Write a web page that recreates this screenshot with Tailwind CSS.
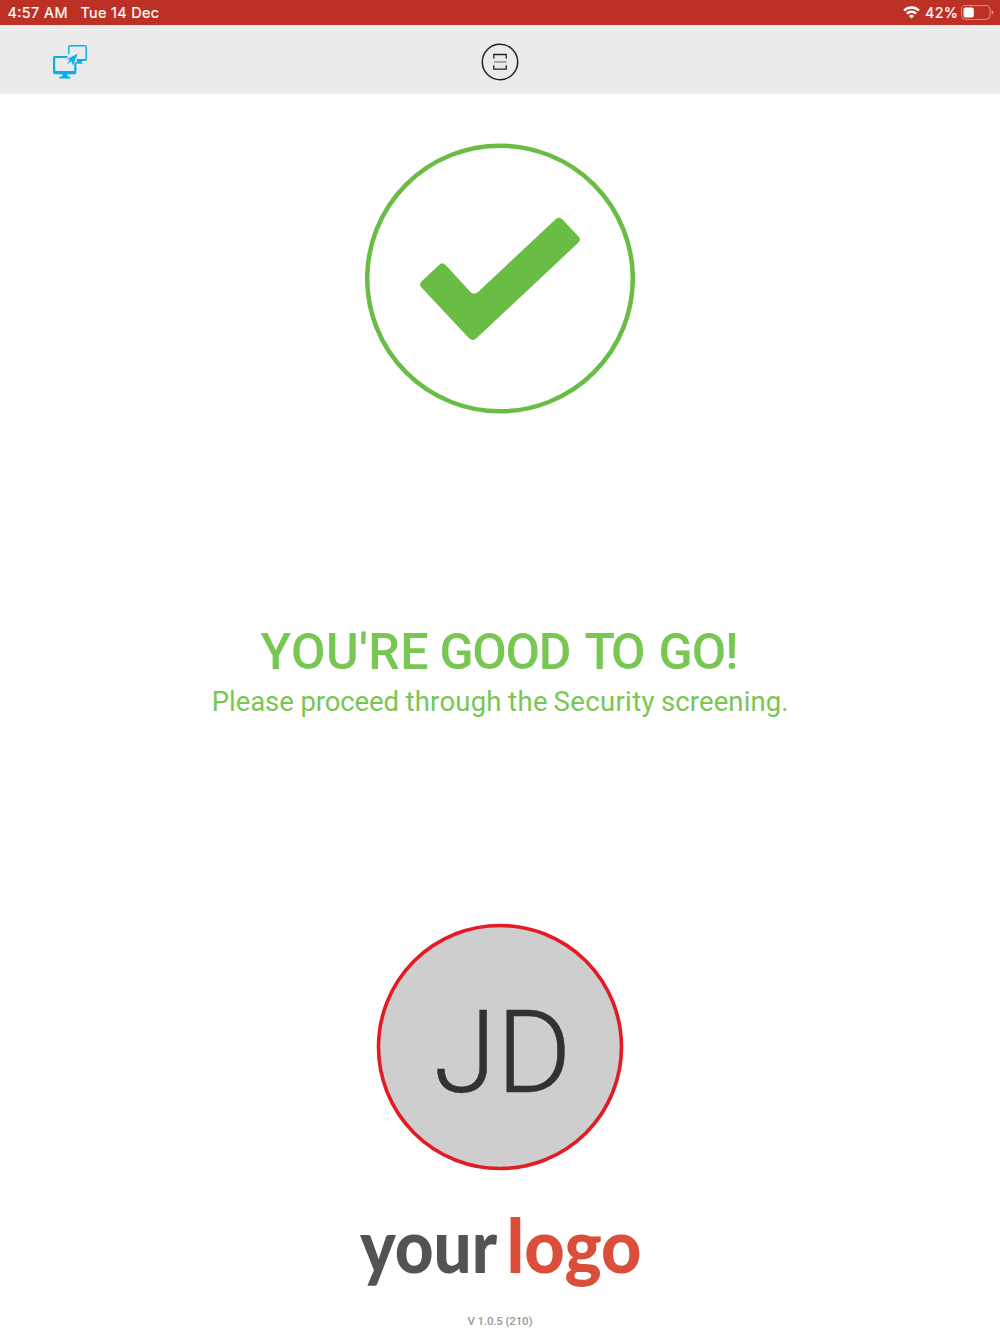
<!DOCTYPE html>
<html lang="en">
<head>
<meta charset="utf-8">
<title>Check-in</title>
<script src="https://cdn.jsdelivr.net/npm/@tailwindcss/browser@4"></script>
</head>
<body class="flex h-[1334px] w-[1000px] flex-col overflow-hidden bg-white font-['Roboto',sans-serif]">
  <div class="flex h-[25px] shrink-0 items-center justify-between bg-[#bd3026] pl-2 pr-[6px] font-['Inter',sans-serif] text-[14.5px] font-normal text-white">
    <svg class="h-[25px] w-[160px]" viewBox="0 0 160 25" fill="#fff" stroke="#fff" stroke-width=".2">
      <text x="-.5" y="17.700" textLength="60">4:57 AM</text>
      <text x="72.500" y="17.700" textLength="78.500">Tue 14 Dec</text>
    </svg>
    <svg class="h-[25px] w-[94px]" viewBox="900 0 94 25" fill="#fff">
      <g fill="none" stroke="#fff" stroke-width="2.3">
        <path d="M904 10.6a10.6 10.6 0 0 1 15 0"/>
        <path d="M906.9 13.6a6.6 6.6 0 0 1 9.2 0"/>
      </g>
      <path d="M908.9 15.9a3.8 3.8 0 0 1 5.2 0l-2.6 2.6z"/>
      <text x="925" y="17.700" textLength="33" stroke="#fff" stroke-width=".2">42%</text>
      <rect x="961.5" y="5.6" width="28.5" height="13.8" rx="4" fill="none" stroke="#fff" stroke-opacity=".45"/>
      <rect x="963.5" y="7.6" width="10.3" height="9.8" rx="2"/>
      <path d="M991.6 10.2q1.8.6 1.8 2.3t-1.8 2.3z" fill-opacity=".5"/>
    </svg>
  </div>
  <header class="grid h-[69px] shrink-0 grid-cols-3 items-center bg-[#ebebeb]">
    <svg class="ml-[52px] mt-[4px] h-[36px] w-[36px]" viewBox="52 43.500 36 36" fill="#09aeef">
      <path fill-rule="evenodd" d="M68.1 54.300V46.2q0-1.700 1.700-1.700h15.4q1.700 0 1.700 1.700v12.6q0 1.700-1.700 1.700h-3.500v1.2l1.200 1.5h-6.200V58.600h8.800V46H69.500v7.200z"/>
      <path fill-rule="evenodd" d="M54.8 55.600h13.4l-1.5 1.900H55.200V70.500h19V62.6l2.200-1.4v10.6q0 2-1.6 2H67.5v1.7l3 1.2v1.4H59.3v-1.4l3-1.2v-1.7h-7.5q-1.8 0-1.8-1.8V57.4q0-1.800 1.8-1.800z"/>
      <path d="M77.700 53.2l-5 12-1-4.800-5 3.600 3.300-5-4 .1z"/>
    </svg>
    <svg class="mt-[5px] h-[40px] w-[40px] justify-self-center" viewBox="480 42 40 40" fill="none" stroke="#222">
      <circle cx="500" cy="62" r="17.7" stroke-width="1.5"/>
      <path d="M493.8 58.4v-3.9h12.4v3.9M493.8 65.2v3.9h12.4v-3.9" stroke-width="1.3"/>
      <path d="M494 62h12.5" stroke="#777" stroke-width="1.2"/>
    </svg>
    <div></div>
  </header>
  <main class="flex flex-1 flex-col items-center">
    <svg class="mt-[49px] h-[271px] w-[270px] shrink-0" viewBox="0 0 270 271">
      <circle cx="135" cy="135.5" r="132.8" fill="none" stroke="#69bd45" stroke-width="4.5"/>
      <path fill="#69bd45" d="M56.5 138.5L74 122Q77.3 118.500 80.600 122L105.500 149Q109 152.300 113 149L190.300 76.500Q194 73 197.500 76.500L213.500 93.500Q216.500 96.800 213 100L111.500 195.300Q107.700 198.600 104 195.300L56.500 144.500Q53.600 141.300 56.500 138.500Z"/>
    </svg>
    <svg class="mt-[206px] h-[110px] w-[620px] shrink-0" viewBox="190 620 620 110" fill="#78c753">
      <text class="text-[50px] font-medium" y="669"><tspan x="260.500" textLength="168">YOU'RE</tspan> <tspan x="439.500" textLength="132">GOOD</tspan> <tspan x="584.500" textLength="61">TO</tspan> <tspan x="658.500" textLength="80">GO!</tspan></text>
      <text class="text-[27.500px]" y="710.700"><tspan x="211.800" textLength="82">Please</tspan> <tspan x="300.500" textLength="98.500">proceed</tspan> <tspan x="405.500" textLength="96">through</tspan> <tspan x="508" textLength="39.500">the</tspan> <tspan x="553.500" textLength="101">Security</tspan> <tspan x="661" textLength="127.500">screening.</tspan></text>
    </svg>
    <svg class="mt-[193px] h-[248px] w-[248px] shrink-0" viewBox="376 923 248 248">
      <circle cx="500" cy="1047" r="121.500" fill="#cecece" stroke="#e41b24" stroke-width="3.600"/>
      <text class="text-[115px] font-light" x="433.500" y="1091.500" textLength="138" lengthAdjust="spacingAndGlyphs" fill="#323232" stroke="#323232" stroke-width=".5">JD</text>
    </svg>
    <svg class="mt-[19px] h-[115px] w-[300px] shrink-0 font-['Lato',sans-serif] text-[74px] font-black" viewBox="350 1190 300 115">
      <text x="360" y="1272.500" textLength="137" lengthAdjust="spacingAndGlyphs" fill="#525355">your</text>
      <text x="506.500" y="1272.500" textLength="135" lengthAdjust="spacingAndGlyphs" fill="#da4e3a">logo</text>
    </svg>
    <svg class="mt-[5px] h-[24px] w-[100px] shrink-0 text-[11.500px] font-medium" viewBox="450 1310 100 24" fill="#999">
      <text x="467.500" y="1325" textLength="65">V 1.0.5 (210)</text>
    </svg>
  </main>
</body>
</html>
